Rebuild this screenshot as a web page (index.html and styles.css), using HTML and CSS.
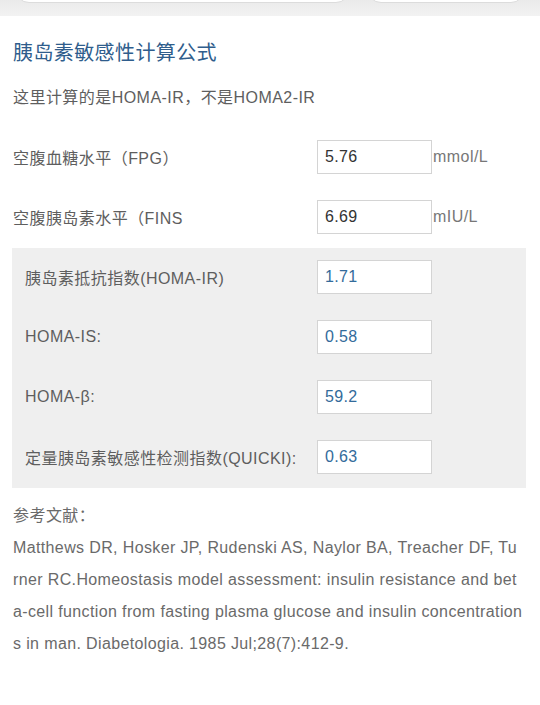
FILE: index.html
```html
<!DOCTYPE html>
<html lang="zh-CN">
<head>
<meta charset="utf-8">
<title>胰岛素敏感性计算公式</title>
<link rel="stylesheet" href="styles.css">
</head>
<body>
<div class="topbar">
  <div class="pill pill-wide"></div>
  <div class="pill pill-narrow"></div>
</div>
<main class="content">
  <h1 class="title">胰岛素敏感性计算公式</h1>
  <p class="subtitle">这里计算的是HOMA-IR，不是HOMA2-IR</p>
  <div class="inputs">
    <div class="row">
      <span class="label">空腹血糖水平（FPG）</span>
      <input class="field" type="text" value="5.76" readonly>
      <span class="unit">mmol/L</span>
    </div>
    <div class="row">
      <span class="label">空腹胰岛素水平（FINS</span>
      <input class="field" type="text" value="6.69" readonly>
      <span class="unit">mIU/L</span>
    </div>
  </div>
  <div class="panel">
    <div class="row">
      <span class="label">胰岛素抵抗指数(HOMA-IR)</span>
      <input class="field result" type="text" value="1.71" readonly>
    </div>
    <div class="row">
      <span class="label">HOMA-IS:</span>
      <input class="field result" type="text" value="0.58" readonly>
    </div>
    <div class="row">
      <span class="label">HOMA-β:</span>
      <input class="field result" type="text" value="59.2" readonly>
    </div>
    <div class="row">
      <span class="label">定量胰岛素敏感性检测指数(QUICKI):</span>
      <input class="field result" type="text" value="0.63" readonly>
    </div>
  </div>
  <div class="refs">
    <div class="refs-title">参考文献：</div>
    <p class="refs-text">Matthews DR, Hosker JP, Rudenski AS, Naylor BA, Treacher DF, Tu<br>rner RC.Homeostasis model assessment: insulin resistance and bet<br>a-cell function from fasting plasma glucose and insulin concentration<br>s in man. Diabetologia. 1985 Jul;28(7):412-9.</p>
  </div>
</main>
</body>
</html>
```
FILE: styles.css
```css
* { box-sizing: border-box; }
html, body { margin: 0; padding: 0; background: #ffffff; }
body {
  font-family: "Liberation Sans", "Noto Sans CJK SC", sans-serif;
  font-size: 16px;
  letter-spacing: 0.45px;
  color: #5e5e5e;
  overflow: hidden;
}
.topbar {
  height: 16px;
  background: linear-gradient(#eaeaea, #f2f2f2);
  display: flex;
  gap: 17px;
  padding: 0 15px;
  overflow: hidden;
}
.pill {
  height: 30px;
  margin-top: -27px;
  background: #ffffff;
  border: 1px solid #dcdcdc;
  border-radius: 14px;
}
.pill-wide { width: 335px; }
.pill-narrow { width: 158px; }
.content { padding: 0 14px 0 12px; }
.title {
  margin: 23px 0 0 1px;
  font-size: 20px;
  line-height: 28px;
  font-weight: normal;
  letter-spacing: 0.4px;
  color: #2f5d8c;
}
.subtitle {
  margin: 19px 0 0 1px;
  line-height: 24px;
  color: #5e5e5e;
}
.inputs {
  margin-top: 30px;
  display: flex;
  flex-direction: column;
  gap: 26px;
}
.row {
  display: grid;
  grid-template-columns: 305px 115px auto;
  align-items: center;
  height: 34px;
}
.inputs .label { padding-left: 1px; }
.label { white-space: nowrap; color: #5e5e5e; }
.field {
  width: 115px;
  height: 34px;
  border: 1px solid #d4d4d4;
  background: #ffffff;
  padding: 0 7px;
  font: inherit;
  font-size: 16px;
  letter-spacing: 0.3px;
  color: #333333;
  outline: none;
  margin: 0;
}
.field.result { color: #336b9b; }
.unit { padding-left: 1px; color: #777777; }
.panel {
  margin-top: 14px;
  background: #efefef;
  padding: 12px 13px 14px 13px;
  display: flex;
  flex-direction: column;
  gap: 26px;
}
.panel .row { grid-template-columns: 292px 115px; }
.refs { margin-top: 12px; }
.refs-title {
  line-height: 32px;
  padding-left: 1px;
  color: #6a6a6a;
}
.refs-text {
  margin: 0;
  padding-left: 1px;
  line-height: 32px;
  letter-spacing: 0.37px;
  color: #6a6a6a;
  word-break: break-all;
}
```
